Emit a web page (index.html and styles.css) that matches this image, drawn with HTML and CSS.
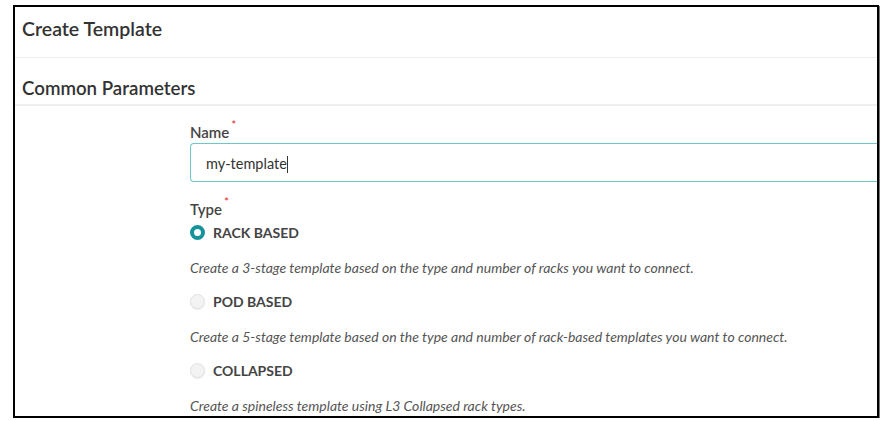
FILE: index.html
```html
<!DOCTYPE html>
<html>

<head>
    <title>Create Template</title>
    <link rel="stylesheet" href="styles.css">
</head>

<body>
    <div class="frame">
        <div class="page-title">Create Template</div>
        <div class="section-title">Common Parameters</div>

        <div class="form">
            <div class="field">
                <label class="field-label">Name<span class="req">*</span></label>
                <div class="text-input"><span class="input-value">my-template</span><span class="caret"></span></div>
            </div>

            <div class="field field-type">
                <label class="field-label">Type<span class="req">*</span></label>

                <div class="radio-row">
                    <span class="radio checked"></span>
                    <span class="radio-text">RACK BASED</span>
                </div>
                <p class="hint">Create a 3-stage template based on the type and number of racks you want to connect.</p>

                <div class="radio-row">
                    <span class="radio"></span>
                    <span class="radio-text">POD BASED</span>
                </div>
                <p class="hint">Create a 5-stage template based on the type and number of rack-based templates you want to connect.</p>

                <div class="radio-row">
                    <span class="radio"></span>
                    <span class="radio-text">COLLAPSED</span>
                </div>
                <p class="hint">Create a spineless template using L3 Collapsed rack types.</p>
            </div>
        </div>
    </div>
</body>

</html>
```

FILE: styles.css
```css
body {
    margin: 0;
    padding: 5px 0 0 13px;
    font-family: Lato, "Open Sans", sans-serif;
    color: #333;
    background-color: #fff;
}

.frame {
    width: 862px;
    height: 409px;
    border: 2px solid #000;
    box-shadow: 1px 1px 0 #777;
    overflow: hidden;
}

.page-title {
    height: 50px;
    line-height: 44px;
    padding-left: 7px;
    font-size: 19.5px;
    font-weight: 600;
    border-bottom: 1px solid #eee;
}

.section-title {
    height: 46px;
    line-height: 60px;
    padding-left: 7px;
    font-size: 18.7px;
    font-weight: 600;
    border-bottom: 2px solid #eef0f0;
}

.form {
    padding-left: 175px;
}

.field {
    margin-top: 9px;
}

.field-type {
    margin-top: 10px;
}

.field-label {
    display: block;
    height: 20px;
    line-height: 20px;
    font-size: 15px;
    font-weight: 600;
    color: #444;
}

.req {
    color: #e04848;
    font-size: 12px;
    vertical-align: 9px;
    margin-left: 2px;
}

.text-input {
    margin-top: 8px;
    height: 37px;
    line-height: 37px;
    border: 1px solid #6cc8c8;
    border-right: none;
    border-radius: 4px 0 0 4px;
    padding-left: 15px;
}

.input-value {
    font-size: 14.5px;
    color: #333;
}

.caret {
    display: inline-block;
    width: 1px;
    height: 17px;
    background-color: #333;
    vertical-align: -4px;
}

.radio-row {
    display: flex;
    align-items: center;
    gap: 8px;
    height: 20px;
    margin-top: 13px;
}

.field-label + .radio-row {
    margin-top: 10px;
}

.radio {
    box-sizing: border-box;
    width: 15px;
    height: 15px;
    border-radius: 50%;
    border: 1px solid #e2e2e2;
    background-color: #f3f3f3;
    box-shadow: 0 1px 1px rgba(0, 0, 0, 0.08);
}

.radio.checked {
    border: 4px solid #14939a;
    background-color: #fff;
    box-shadow: none;
}

.radio-text {
    font-size: 14px;
    font-weight: 700;
    color: #444;
}

.hint {
    margin: 16px 0 0;
    height: 20px;
    line-height: 20px;
    font-size: 14px;
    font-style: italic;
    color: #555;
}
```
